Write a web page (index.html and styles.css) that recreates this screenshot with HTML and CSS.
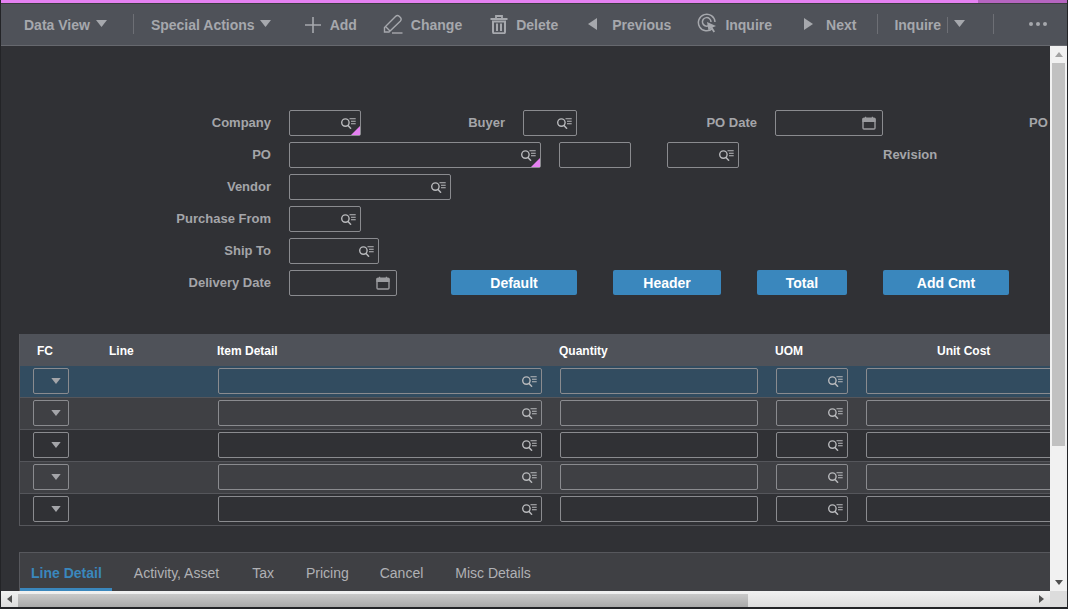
FILE: index.html
```html
<!DOCTYPE html>
<html lang="en">
<head>
<meta charset="utf-8">
<title>Purchase Order</title>
<link rel="stylesheet" href="styles.css">
</head>
<body>
<svg class="defs" width="0" height="0" aria-hidden="true">
  <defs>
    <symbol id="lookup" viewBox="0 0 15 11">
      <circle cx="4.4" cy="4.6" r="3.7" fill="none" stroke="currentColor" stroke-width="1.4"/>
      <path d="M6.8 7.2 L10 10.7" fill="none" stroke="currentColor" stroke-width="1.5"/>
      <path d="M8.5 .7H14.7M10 3.2H14.7M10 5.7H14.7" fill="none" stroke="currentColor" stroke-width="1.1"/>
    </symbol>
    <symbol id="calendar" viewBox="0 0 14 14">
      <path d="M1 3.2A1 1 0 0 1 2 2.2H12A1 1 0 0 1 13 3.2V12A1 1 0 0 1 12 13H2A1 1 0 0 1 1 12Z" fill="none" stroke="currentColor" stroke-width="1.4"/>
      <path d="M1 3H13V5.5H1ZM3.6 .8V3M10.4 .8V3" fill="currentColor" stroke="currentColor" stroke-width="1.2"/>
    </symbol>
    <symbol id="caret" viewBox="0 0 11 7">
      <path d="M0 0H11L5.5 7Z" fill="currentColor"/>
    </symbol>
  </defs>
</svg>
<div class="app">
  <div class="progress"><div class="progress-fill"></div></div>
  <header class="toolbar">
    <div class="tool tool-dataview"><span>Data View</span><svg class="caret"><use href="#caret"/></svg></div>
    <div class="sep sep-a"></div>
    <div class="tool tool-special"><span>Special Actions</span><svg class="caret"><use href="#caret"/></svg></div>
    <div class="tool tool-add">
      <svg class="ic-plus" viewBox="0 0 16 16"><path d="M8 0V16M0 8H16" stroke="currentColor" stroke-width="1.6" fill="none"/></svg>
      <span>Add</span>
    </div>
    <div class="tool tool-change">
      <svg class="ic-pencil" viewBox="0 0 20 20"><path d="M1.5 17.5V13.5L12.5 2.5C13.6 1.4 15 1.2 16.2 2.3L17.4 3.5C18.5 4.7 18.3 6 17.2 7.2L6 18H1.5ZM3 13L7 17" fill="none" stroke="currentColor" stroke-width="1.4"/><path d="M9 19H19.5" stroke="currentColor" stroke-width="1.4"/></svg>
      <span>Change</span>
    </div>
    <div class="tool tool-delete">
      <svg class="ic-trash" viewBox="0 0 17 19"><path d="M0 4H17M5.5 3.5V1H11.5V3.5" fill="none" stroke="currentColor" stroke-width="1.8"/><path d="M2.5 6.5H14.5V17A1.2 1.2 0 0 1 13.3 18.2H3.7A1.2 1.2 0 0 1 2.5 17Z" fill="none" stroke="currentColor" stroke-width="2"/><path d="M6.5 8.5V16M10.5 8.5V16" stroke="currentColor" stroke-width="2"/></svg>
      <span>Delete</span>
    </div>
    <div class="tool tool-prev">
      <svg class="ic-arrow" viewBox="0 0 9 12"><path d="M9 0V12L0 6Z" fill="currentColor"/></svg>
      <span>Previous</span>
    </div>
    <div class="tool tool-inquire">
      <svg class="ic-inq" viewBox="0 0 20 20"><path d="M15.5 15.5A8.3 8.3 0 1 1 18 9" fill="none" stroke="currentColor" stroke-width="1.5"/><path d="M11.5 12.8A4.3 4.3 0 1 1 14 9" fill="none" stroke="currentColor" stroke-width="1.5"/><path d="M10 9L19 13L15.5 14.5L18 18.5L16.5 19.5L14 15.5L11.5 17.5Z" fill="currentColor"/></svg>
      <span>Inquire</span>
    </div>
    <div class="tool tool-next">
      <svg class="ic-arrow" viewBox="0 0 9 12"><path d="M0 0V12L9 6Z" fill="currentColor"/></svg>
      <span>Next</span>
    </div>
    <div class="sep sep-b"></div>
    <div class="tool tool-split"><span>Inquire</span><div class="split-bar"></div><svg class="caret"><use href="#caret"/></svg></div>
    <div class="sep sep-c"></div>
    <div class="more"><i></i><i></i><i></i></div>
  </header>
  <div class="viewport">
    <main class="content">
      <form class="form">
        <label class="lbl c-company r1">Company</label>
        <div class="field w4 f-a r1"><svg class="lk"><use href="#lookup"/></svg><b class="req"></b></div>
        <label class="lbl c-buyer r1">Buyer</label>
        <div class="field w3 f-b r1"><svg class="lk"><use href="#lookup"/></svg></div>
        <label class="lbl c-date r1">PO Date</label>
        <div class="field w6 f-c r1"><svg class="cal"><use href="#calendar"/></svg></div>
        <label class="lbl-left c-po2 r1">PO</label>

        <label class="lbl c-company r2">PO</label>
        <div class="field w14 f-a r2"><svg class="lk"><use href="#lookup"/></svg><b class="req"></b></div>
        <div class="field w4 f-d r2"></div>
        <div class="field w4 f-e r2"><svg class="lk"><use href="#lookup"/></svg></div>
        <label class="lbl-left f-f r2">Revision</label>

        <label class="lbl c-company r3">Vendor</label>
        <div class="field w9 f-a r3"><svg class="lk"><use href="#lookup"/></svg></div>

        <label class="lbl c-company r4">Purchase From</label>
        <div class="field w4 f-a r4"><svg class="lk"><use href="#lookup"/></svg></div>

        <label class="lbl c-company r5">Ship To</label>
        <div class="field w5 f-a r5"><svg class="lk"><use href="#lookup"/></svg></div>

        <label class="lbl c-company r6">Delivery Date</label>
        <div class="field w6 f-a r6"><svg class="cal"><use href="#calendar"/></svg></div>
        <button type="button" class="btn b-default r6">Default</button>
        <button type="button" class="btn b-header r6">Header</button>
        <button type="button" class="btn b-total r6">Total</button>
        <button type="button" class="btn b-cmt r6">Add Cmt</button>
      </form>

      <section class="table">
        <div class="row head">
          <span class="h-fc">FC</span>
          <span class="h-line">Line</span>
          <span class="h-item">Item Detail</span>
          <span class="h-qty">Quantity</span>
          <span class="h-uom">UOM</span>
          <span class="h-cost">Unit Cost</span>
        </div>
        <div class="row sel">
          <div class="cell c-sel"><svg class="caret-s"><use href="#caret"/></svg></div>
          <div class="cell c-item"><svg class="lk"><use href="#lookup"/></svg></div>
          <div class="cell c-qty"></div>
          <div class="cell c-uom"><svg class="lk"><use href="#lookup"/></svg></div>
          <div class="cell c-cost"></div>
        </div>
        <div class="row alt">
          <div class="cell c-sel"><svg class="caret-s"><use href="#caret"/></svg></div>
          <div class="cell c-item"><svg class="lk"><use href="#lookup"/></svg></div>
          <div class="cell c-qty"></div>
          <div class="cell c-uom"><svg class="lk"><use href="#lookup"/></svg></div>
          <div class="cell c-cost"></div>
        </div>
        <div class="row">
          <div class="cell c-sel"><svg class="caret-s"><use href="#caret"/></svg></div>
          <div class="cell c-item"><svg class="lk"><use href="#lookup"/></svg></div>
          <div class="cell c-qty"></div>
          <div class="cell c-uom"><svg class="lk"><use href="#lookup"/></svg></div>
          <div class="cell c-cost"></div>
        </div>
        <div class="row alt">
          <div class="cell c-sel"><svg class="caret-s"><use href="#caret"/></svg></div>
          <div class="cell c-item"><svg class="lk"><use href="#lookup"/></svg></div>
          <div class="cell c-qty"></div>
          <div class="cell c-uom"><svg class="lk"><use href="#lookup"/></svg></div>
          <div class="cell c-cost"></div>
        </div>
        <div class="row">
          <div class="cell c-sel"><svg class="caret-s"><use href="#caret"/></svg></div>
          <div class="cell c-item"><svg class="lk"><use href="#lookup"/></svg></div>
          <div class="cell c-qty"></div>
          <div class="cell c-uom"><svg class="lk"><use href="#lookup"/></svg></div>
          <div class="cell c-cost"></div>
        </div>
      </section>

      <nav class="tabs">
        <span class="tab active">Line Detail</span>
        <span class="tab tab-wide">Activity, Asset</span>
        <span class="tab">Tax</span>
        <span class="tab tab-tight">Pricing</span>
        <span class="tab">Cancel</span>
        <span class="tab">Misc Details</span>
      </nav>
    </main>
    <aside class="vbar">
      <svg class="sb-arrow" viewBox="0 0 8 5"><path d="M0 5H8L4 0Z" fill="currentColor"/></svg>
      <div class="vthumb"></div>
      <svg class="sb-arrow sb-end" viewBox="0 0 8 5"><path d="M0 0H8L4 5Z" fill="currentColor"/></svg>
    </aside>
  </div>
  <div class="hbar">
    <svg class="sb-arrow-h" viewBox="0 0 5 8"><path d="M5 0V8L0 4Z" fill="currentColor"/></svg>
    <div class="hthumb"></div>
    <svg class="sb-arrow-h sb-end-h" viewBox="0 0 5 8"><path d="M0 0V8L5 4Z" fill="currentColor"/></svg>
    <div class="corner"></div>
  </div>
</div>
</body>
</html>
```
FILE: styles.css
```css
* { box-sizing: border-box; }
html, body { margin: 0; height: 100%; overflow: hidden; background: #303135; }
body { font-family: "Liberation Sans", Arial, sans-serif; color: #a4a5a9; }
.defs { position: absolute; }
.app { width: 1068px; height: 609px; display: flex; flex-direction: column; border-left: 1px solid #232427; border-right: 1px solid #232427; border-bottom: 2px solid #232427; }

.progress { height: 4px; background: #b565c0; border-bottom: 1px solid #3a3b3f; flex: none; }
.progress-fill { width: 977px; height: 3px; background: #e581f2; }

.toolbar { height: 42px; flex: none; display: flex; align-items: center; background: #4f5259; border-bottom: 1px solid #66686e; color: #a6a8ad; font-size: 14px; font-weight: 700; padding-left: 23px; }
.tool { display: flex; align-items: center; gap: 8px; white-space: nowrap; }
.sep { width: 1px; height: 20px; background: #6d6f75; margin-top: -2px; flex: none; }
.caret { width: 11px; height: 7px; margin-top: -2px; color: #a6a8ad; }
.tool-dataview { gap: 6px; }
.sep-a { margin-left: 26px; }
.tool-special { margin-left: 17px; gap: 5px; }
.tool-add { margin-left: 34px; gap: 9px; }
.ic-plus { width: 16px; height: 16px; }
.tool-change { margin-left: 26px; }
.ic-pencil { width: 20px; height: 20px; margin-top: -2px; }
.tool-delete { margin-left: 28px; }
.ic-trash { width: 18px; height: 19px; margin-top: -1px; }
.tool-prev { margin-left: 30px; gap: 15px; }
.ic-arrow { width: 9px; height: 12px; margin-top: -1px; }
.tool-inquire { margin-left: 26px; }
.ic-inq { width: 20px; height: 20px; margin-top: -3px; }
.tool-next { margin-left: 32px; gap: 13px; }
.sep-b { margin-left: 21px; }
.tool-split { margin-left: 16px; gap: 6px; }
.split-bar { width: 1px; height: 16px; background: #6d6f75; }
.sep-c { margin-left: 28px; }
.more { margin-left: 35px; display: flex; gap: 3px; margin-top: -2px; }
.more i { width: 4px; height: 4px; border-radius: 50%; background: #a6a8ad; }

.viewport { flex: 1; min-height: 0; display: flex; }
.content { flex: 1; min-width: 0; overflow: hidden; position: relative; }

.form { display: grid; grid-template-columns: repeat(70, 18px); grid-auto-rows: 32px; padding-top: 64px; font-size: 13px; font-weight: 700; color: #a4a5a9; }
.r1 { grid-row: 1; } .r2 { grid-row: 2; } .r3 { grid-row: 3; } .r4 { grid-row: 4; } .r5 { grid-row: 5; } .r6 { grid-row: 6; }
.lbl { height: 26px; line-height: 25px; text-align: right; white-space: nowrap; }
.lbl-left { height: 26px; line-height: 25px; white-space: nowrap; }
.c-company { grid-column: 1 / span 15; }
.c-buyer { grid-column: 17 / span 12; }
.c-date { grid-column: 31 / span 12; }
.c-po2 { grid-column: 58 / span 3; padding-left: 2px; }
.field { position: relative; height: 26px; border: 1px solid #8a8b8f; border-radius: 2px; }
.w3 { grid-column-end: span 3; } .w4 { grid-column-end: span 4; } .w5 { grid-column-end: span 5; } .w6 { grid-column-end: span 6; } .w9 { grid-column-end: span 9; } .w14 { grid-column-end: span 14; }
.f-a { grid-column-start: 17; }
.f-b { grid-column-start: 30; }
.f-c { grid-column-start: 44; }
.f-d { grid-column-start: 32; }
.f-e { grid-column-start: 38; }
.f-f { grid-column: 50 / span 6; }
.lk { position: absolute; right: 4px; top: 7px; width: 15px; height: 11px; color: #b8b9bc; }
.cal { position: absolute; right: 6px; top: 5px; width: 14px; height: 14px; color: #9a9b9f; }
.req { position: absolute; right: 0; bottom: 0; width: 0; height: 0; border-style: solid; border-width: 0 0 9px 9px; border-color: transparent transparent #e581f2 transparent; }
.btn { height: 25px; border: 0; border-radius: 2px; background: #3a87bd; color: #fff; font: 700 14px "Liberation Sans", Arial, sans-serif; padding: 0; }
.b-default { grid-column: 26 / span 7; }
.b-header { grid-column: 35 / span 6; }
.b-total { grid-column: 43 / span 5; }
.b-cmt { grid-column: 50 / span 7; }

.table { margin: 32px 0 0 18px; width: 1100px; border-left: 1px solid #57585d; }
.row { height: 32px; display: flex; align-items: flex-start; padding-top: 2px; border-bottom: 1px solid #55565b; position: relative; }
.head { background: #4f5259; border-bottom: 0; padding-top: 0; align-items: center; color: #fff; font-size: 12px; font-weight: 700; }
.head span { white-space: nowrap; padding-top: 2px; }
.h-fc { margin-left: 17px; width: 72px; }
.h-line { width: 108px; }
.h-item { width: 342px; }
.h-qty { width: 216px; }
.h-uom { width: 162px; }
.h-cost { flex: none; }
.sel { background: #324c60; }
.alt { background: #3f4044; }
.cell { height: 26px; border: 1px solid #8a8b8f; border-radius: 2px; position: relative; flex: none; }
.c-sel { width: 36px; margin-left: 13px; }
.c-item { width: 324px; margin-left: 149px; }
.c-qty { width: 198px; margin-left: 18px; }
.c-uom { width: 72px; margin-left: 18px; }
.c-cost { width: 198px; margin-left: 18px; }
.caret-s { position: absolute; right: 7px; top: 9px; width: 10px; height: 6px; color: #a4a5a9; }

.tabs { margin: 26px 0 0 18px; width: 1100px; height: 60px; background: #3f4044; border: 1px solid #57585d; display: flex; font-size: 14px; color: #b0b1b5; }
.tab { height: 38px; line-height: 40px; margin-right: 32px; white-space: nowrap; }
.tab:first-child { margin-right: 22px; }
.tab-wide { margin-right: 33px; }
.tab-tight { margin-right: 31px; }
.active { padding: 0 10px 0 11px; font-weight: 700; color: #3a87bd; border-bottom: 3px solid #3a87bd; }

.vbar { width: 17px; flex: none; background: #f1f1f1; display: flex; flex-direction: column; align-items: center; color: #505050; }
.sb-arrow { width: 8px; height: 5px; margin: 6px 0; flex: none; color: #a3a3a3; }
.sb-end { margin-top: auto; color: #505050; }
.vthumb { width: 13px; height: 383px; background: #c1c1c1; }

.hbar { height: 16px; flex: none; display: flex; align-items: center; background: linear-gradient(#f1f1f1, #dcdcdc); color: #505050; position: relative; }
.sb-arrow-h { width: 5px; height: 8px; margin: 0 6px; flex: none; }
.hthumb { width: 730px; height: 13px; margin-top: 2px; background: linear-gradient(#c9c9c9, #a9a9a9); }
.sb-end-h { margin-left: auto; margin-right: 23px; }
.corner { position: absolute; right: 0; top: 0; width: 17px; height: 16px; background: #dcdcdc; }
```
